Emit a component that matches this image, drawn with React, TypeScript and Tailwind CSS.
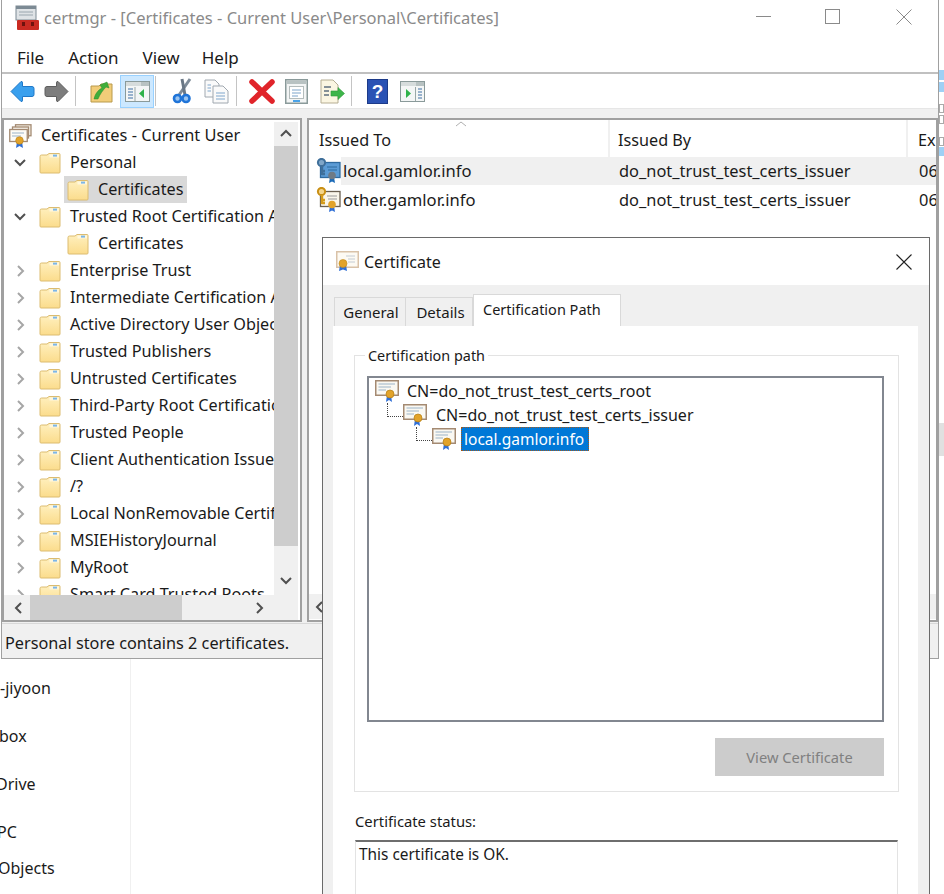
import React from "react";

const Folder = ({ className = "" }: { className?: string }) => (
  <svg width="22" height="22" viewBox="0 0 22 22" className={`shrink-0 ${className}`}>
    <defs>
      <linearGradient id="fg" x1="0" y1="0" x2="0" y2="1">
        <stop offset="0" stopColor="#fff0bf" />
        <stop offset="1" stopColor="#fbdc8c" />
      </linearGradient>
    </defs>
    <path d="M1 4.5 Q1 3 2.5 3 H8 L10 1.5 H20 Q21 1.5 21 2.5 V20 Q21 21 20 21 H2 Q1 21 1 20 Z" fill="url(#fg)" stroke="#dcbc70" strokeWidth="1" />
    <path d="M10.5 2.5 H20 V5.5 H10.5 Z" fill="#fff7dc" />
    <rect x="14" y="2.6" width="4" height="2" fill="#7cb6e8" />
  </svg>
);

const Cert = ({ className = "" }: { className?: string }) => (
  <svg width="24" height="24" viewBox="0 0 24 24" className={`shrink-0 ${className}`}>
    <rect x="0.75" y="1.75" width="22.5" height="14.5" fill="#faf8f2" stroke="#a48a72" strokeWidth="1.5" />
    <path d="M3.5 5 H20 M3.5 8 H16 M3.5 11 H11" stroke="#9cb4c8" strokeWidth="1.2" />
    <path d="M12 16 L11 23 L14 21 L17 23 L16 16 Z" fill="#2f6fd6" />
    <circle cx="15" cy="15" r="4" fill="#e2a32a" stroke="#b57e15" strokeWidth="0.7" />
  </svg>
);

const RootCert = () => (
  <svg width="23" height="24" viewBox="0 0 23 24" className="shrink-0">
    <rect x="6.5" y="0.75" width="15.5" height="11" fill="#f5f0e6" stroke="#a48a72" strokeWidth="1.3" />
    <rect x="3.5" y="3" width="16" height="11" fill="#f8f4ec" stroke="#a48a72" strokeWidth="1.3" />
    <rect x="0.75" y="5.5" width="17.5" height="12" fill="#fdfbf6" stroke="#a48a72" strokeWidth="1.3" />
    <path d="M3 9 H15 M3 12 H12" stroke="#9cb4c8" strokeWidth="1.1" />
    <path d="M8 18 L7 24 L10.5 22 L14 24 L13 18 Z" fill="#2f6fd6" />
    <circle cx="10.5" cy="16.5" r="3.8" fill="#e2a32a" stroke="#b57e15" strokeWidth="0.6" />
  </svg>
);

const DialogCert = () => (
  <svg width="23" height="21" viewBox="0 0 23 21" className="shrink-0">
    <rect x="0.75" y="0.75" width="21.5" height="15.5" fill="#fdfaf3" stroke="#d9c2a8" strokeWidth="1.5" />
    <path d="M10 5 H19 M12 8 H19 M12 11 H19" stroke="#c4ccd4" strokeWidth="1" />
    <path d="M4 14 L3 20 L7 18.5 L11 20 L10 14 Z" fill="#2f6fd6" />
    <circle cx="7" cy="12.5" r="4" fill="#e2a32a" stroke="#c08a1c" strokeWidth="0.6" />
  </svg>
);

const KeyCert = ({ blue = false }: { blue?: boolean }) => (
  <svg width="25" height="26" viewBox="0 0 25 26" className="shrink-0">
    <rect x="4.5" y="4.5" width="19.5" height="15" fill={blue ? "#5b9bd5" : "#faf6ea"} stroke={blue ? "#2f6a9f" : "#6b6050"} strokeWidth="1.3" />
    <path d="M11 9 H21 M12 12 H21" stroke={blue ? "#2f6a9f" : "#9a9a9a"} strokeWidth="1" />
    <circle cx="5.5" cy="4.5" r="3.6" fill={blue ? "#7fa6c8" : "#f4d58a"} stroke={blue ? "#3f6f9a" : "#c98f14"} strokeWidth="2" />
    <path d="M6 8 V17 M6 13 H9 M6 16 H9" stroke={blue ? "#3f6f9a" : "#d59c1a"} strokeWidth="2.4" />
    <path d="M14 19 L13 25 L16 23.5 L19 25 L18 19 Z" fill={blue ? "#1c6bb8" : "#2f6fd6"} />
    <circle cx="16" cy="17.5" r="3.8" fill={blue ? "#6f7a85" : "#e2a32a"} />
  </svg>
);

const Chevron = ({ dir, dark = false }: { dir: "down" | "right" | "left" | "up"; dark?: boolean }) => {
  const d = { down: "M1 3 L6 8 L11 3", right: "M4 1 L9 6 L4 11", left: "M8 1 L3 6 L8 11", up: "M1 8 L6 3 L11 8" }[dir];
  return (
    <svg width="12" height="12" viewBox="0 0 12 12" className="shrink-0">
      <path d={d} fill="none" stroke={dark ? "#505050" : "#a6a6a6"} strokeWidth="2" />
    </svg>
  );
};

const Sep = ({ className = "" }: { className?: string }) => <div className={`w-px h-[30px] bg-[#c4c4c4] shrink-0 ${className}`} />;

const TB = ({ children, active = false, className = "" }: { children: React.ReactNode; active?: boolean; className?: string }) => (
  <div className={`w-[34px] h-[33px] shrink-0 flex items-center justify-center border ${active ? "bg-[#cce8ff] border-[#99d1ff]" : "border-transparent"} ${className}`}>
    {children}
  </div>
);

const WinIcon = ({ side }: { side: "left" | "right" }) => (
  <svg width="25" height="21" viewBox="0 0 25 21">
    <rect x="0.5" y="0.5" width="24" height="20" fill="#f4f6f6" stroke="#8a9a9a" />
    <rect x="1" y="1" width="23" height="4" fill="#b8c2c2" />
    <rect x="1" y="1" width="15" height="4" fill="#d6dcdc" />
    {side === "left" ? (
      <>
        <path d="M3 8 H8 M3 11 H8 M3 14 H8 M3 17 H8" stroke="#7a9cc0" strokeWidth="1.4" />
        <path d="M10 6 V20" stroke="#9aa8a8" />
        <path d="M19 8 V17 L14 12.5 Z" fill="#2fb24a" />
      </>
    ) : (
      <>
        <path d="M18 8 H22 M18 11 H22 M18 14 H22 M18 17 H22" stroke="#7a9cc0" strokeWidth="1.4" />
        <path d="M15.5 6 V20" stroke="#9aa8a8" />
        <path d="M6 8 V17 L11 12.5 Z" fill="#2fb24a" />
      </>
    )}
  </svg>
);

const Toolbar = () => (
  <div className="flex items-center h-[34px] pl-[3px] bg-white">
    <TB>
      <svg width="25" height="23" viewBox="0 0 25 23">
        <path d="M1 11.5 L11 1.5 Q12.5 1 12.5 3 V6.5 H22 Q24 6.5 24 8.5 V14.5 Q24 16.5 22 16.5 H12.5 V20 Q12.5 22 11 21.5 Z" fill="#3aa0ee" stroke="#1f78c8" />
      </svg>
    </TB>
    <TB>
      <svg width="25" height="23" viewBox="0 0 25 23">
        <path d="M24 11.5 L14 1.5 Q12.5 1 12.5 3 V6.5 H3 Q1 6.5 1 8.5 V14.5 Q1 16.5 3 16.5 H12.5 V20 Q12.5 22 14 21.5 Z" fill="#7d7d7d" stroke="#5e5e5e" />
      </svg>
    </TB>
    <Sep className="ml-[2px]" />
    <TB className="ml-[8px]">
      <svg width="23" height="23" viewBox="0 0 23 23">
        <path d="M1 6 H9 L11 4 H22 V22 H1 Z" fill="#f2cd79" stroke="#b99a4d" />
        <path d="M4 19 C5 14 8 10 12 8 L10 5 L17 2 L19 8 L16 7 C13 10 10 14 8 19 Z" fill="#3fae3a" stroke="#2a8a2a" strokeWidth="0.5" />
      </svg>
    </TB>
    <TB active className="ml-[2px]"><WinIcon side="left" /></TB>
    <Sep className="ml-[1px]" />
    <TB className="ml-[9px]">
      <svg width="20" height="26" viewBox="0 0 20 26">
        <path d="M18 1 L7 17" stroke="#7f8c99" strokeWidth="3" />
        <path d="M10 1 L13 17" stroke="#6a7785" strokeWidth="3" />
        <circle cx="5.5" cy="20.5" r="3.5" fill="#9ac4f0" stroke="#1f74d8" strokeWidth="2.6" />
        <circle cx="14" cy="20.5" r="3.5" fill="#9ac4f0" stroke="#1f74d8" strokeWidth="2.6" />
      </svg>
    </TB>
    <TB>
      <svg width="25" height="25" viewBox="0 0 25 25">
        <path d="M1 1 H11 L15 5 V18 H1 Z" fill="#fafafa" stroke="#a0a8b0" />
        <path d="M9 7 H19 L24 12 V24 H9 Z" fill="#fafafa" stroke="#a0a8b0" />
        <path d="M3.5 6 H7 M3.5 9 H7 M3.5 12 H7 M12 14 H21 M12 17 H21 M12 20 H21" stroke="#7fa6cc" strokeWidth="1.2" />
      </svg>
    </TB>
    <Sep className="ml-[3px]" />
    <TB className="ml-[8px]">
      <svg width="26" height="25" viewBox="0 0 26 25">
        <path d="M3 3 L23 22 M23 3 L3 22" stroke="#e0242a" strokeWidth="5.5" strokeLinecap="round" />
      </svg>
    </TB>
    <TB>
      <svg width="23" height="25" viewBox="0 0 23 25">
        <rect x="0.75" y="0.75" width="21.5" height="23.5" fill="#f3f5f5" stroke="#8a9a9a" strokeWidth="1.5" />
        <rect x="1.5" y="1.5" width="20" height="3.5" fill="#b8c2c2" />
        <rect x="4.5" y="7.5" width="14" height="12" fill="#fff" stroke="#b4bcbc" />
        <path d="M7 11 H16 M7 14 H16 M7 17 H13" stroke="#7fa6cc" strokeWidth="1.2" />
        <rect x="8" y="21" width="7" height="2" fill="#4aa3e8" />
      </svg>
    </TB>
    <TB className="ml-[2px]">
      <svg width="25" height="25" viewBox="0 0 25 25">
        <path d="M1 1 H13 L18 6 V24 H1 Z" fill="#fbf6e2" stroke="#b5ad92" />
        <path d="M4 8 H11 M4 12 H9 M4 16 H9" stroke="#5f6f7f" strokeWidth="1.3" />
        <path d="M24.5 14.5 L18 8.5 V12 H11 V17 H18 V20.5 Z" fill="#3eb54a" stroke="#2f9a3a" strokeWidth="0.6" />
      </svg>
    </TB>
    <Sep className="ml-[2px]" />
    <TB className="ml-[8px]">
      <svg width="21" height="25" viewBox="0 0 21 25">
        <rect x="0.5" y="0.5" width="20" height="24" fill="#2a52b4" stroke="#1c3a88" />
        <text x="10.5" y="19" textAnchor="middle" fontSize="19" fontWeight="700" fontFamily="Liberation Sans, sans-serif" fill="#fff">?</text>
      </svg>
    </TB>
    <TB className="ml-[1px]"><WinIcon side="right" /></TB>
  </div>
);

type Node = { label: string; level: 0 | 1 | 2; chevron?: "down" | "right"; selected?: boolean };
const rows: Node[] = [
  { label: "Personal", level: 1, chevron: "down" },
  { label: "Certificates", level: 2, selected: true },
  { label: "Trusted Root Certification Authorities", level: 1, chevron: "down" },
  { label: "Certificates", level: 2 },
  { label: "Enterprise Trust", level: 1, chevron: "right" },
  { label: "Intermediate Certification Authorities", level: 1, chevron: "right" },
  { label: "Active Directory User Object", level: 1, chevron: "right" },
  { label: "Trusted Publishers", level: 1, chevron: "right" },
  { label: "Untrusted Certificates", level: 1, chevron: "right" },
  { label: "Third-Party Root Certification Authorities", level: 1, chevron: "right" },
  { label: "Trusted People", level: 1, chevron: "right" },
  { label: "Client Authentication Issuers", level: 1, chevron: "right" },
  { label: "/?", level: 1, chevron: "right" },
  { label: "Local NonRemovable Certificates", level: 1, chevron: "right" },
  { label: "MSIEHistoryJournal", level: 1, chevron: "right" },
  { label: "MyRoot", level: 1, chevron: "right" },
  { label: "Smart Card Trusted Roots", level: 1, chevron: "right" },
];

const TreeRow = ({ n }: { n: Node }) => (
  <div className="h-[27px] flex items-center whitespace-nowrap">
    {n.level === 1 ? (
      <div className="flex items-center pl-[10px] gap-[13px]">
        <Chevron dir={n.chevron!} dark={n.chevron === "down"} />
        <Folder />
        <span className="ml-[-4px] mt-[-2px]">{n.label}</span>
      </div>
    ) : (
      <div className={`ml-[60px] h-[27px] flex items-center pl-[3px] pr-[4px] ${n.selected ? "bg-[#d9d9d9]" : ""}`}>
        <Folder />
        <span className="ml-[9px] mt-[-2px]">{n.label}</span>
      </div>
    )}
  </div>
);

const ListRow = ({ blue, name, selected, className = "" }: { blue?: boolean; name: string; selected?: boolean; className?: string }) => (
  <div className={`h-[28px] flex items-center whitespace-nowrap pl-[7px] ${className}`}>
    <KeyCert blue={blue} />
    <div className={`flex-1 h-full flex items-center ${selected ? "bg-[#f0f0f0]" : ""}`}>
      <span className="ml-[2px] w-[276px] shrink-0 text-[16.6px]">{name}</span>
      <span className="w-[300px] shrink-0">do_not_trust_test_certs_issuer</span>
      <span>06</span>
    </div>
  </div>
);

const App = () => (
  <div className="relative w-[944px] h-[894px] overflow-hidden bg-white text-[#1a1a1a] text-[16.4px] leading-[20px] font-['Noto_Sans','Open_Sans',sans-serif]">
    {/* desktop behind */}
    <div className="absolute left-0 top-[658px] w-[131px] h-[236px] border-r border-[#f0f0f0] overflow-hidden whitespace-nowrap text-[16px]">
      <div className="flex flex-col pt-[20px]">
        <div className="h-[48px]">-jiyoon</div>
        <div className="h-[48px] ml-[-1px]">box</div>
        <div className="h-[48px] ml-[-4px]">Drive</div>
        <div className="h-[36px] ml-[-3px]">PC</div>
        <div className="ml-[-2px]">Objects</div>
      </div>
    </div>
    <div className="absolute right-0 top-[70px] w-[5px] flex flex-col">
      <div className="h-[10px] bg-[#9fd0f5]" />
      <div className="h-[2px]" />
      <div className="h-[10px] bg-[#9fd0f5]" />
      <div className="h-[12px]" />
      <div className="h-[9px] border border-[#aaa]" />
      <div className="h-[2px]" />
      <div className="h-[9px] border border-[#aaa]" />
      <div className="h-[13px]" />
      <div className="h-[9px] border border-[#aaa]" />
      <div className="h-[1px]" />
      <div className="h-[9px] bg-[#9fd0f5]" />
      <div className="h-[267px]" />
      <div className="h-[33px] bg-[#e0e0e0]" />
    </div>

    {/* certmgr window */}
    <div className="absolute left-px top-0 w-[938px] h-[659px] flex flex-col bg-white border-x border-b border-[#a0a0a0]">
      <div className="h-[40px] flex items-center pl-[13px] shrink-0">
        <svg width="24" height="26" viewBox="0 0 24 26" className="shrink-0 mt-[-4px]">
          <rect x="1" y="1" width="20" height="14" fill="#dfe3e6" stroke="#7c8a94" />
          <rect x="1" y="1" width="20" height="3" fill="#7c8a94" />
          <path d="M4 7 H18 M4 10 H18" stroke="#9aa6ae" />
          <rect x="2" y="15" width="22" height="10" rx="1" fill="#c92a22" />
          <rect x="7" y="17" width="3" height="4" fill="#6e120e" />
          <rect x="16" y="17" width="3" height="4" fill="#6e120e" />
        </svg>
        <span className="ml-[5px] mt-[-4px] text-[16.5px] text-[#8a8a8a] whitespace-nowrap">certmgr - [Certificates - Current User\Personal\Certificates]</span>
        <div className="ml-auto flex items-center mr-[26px] mt-[-7px]">
          <div className="w-[15px] h-px bg-[#8a8a8a] mr-[54px]" />
          <div className="w-[15px] h-[15px] border border-[#8a8a8a] mr-[56px]" />
          <svg width="16" height="16" viewBox="0 0 16 16"><path d="M0.5 0.5 L15.5 15.5 M15.5 0.5 L0.5 15.5" stroke="#8a8a8a" strokeWidth="1" /></svg>
        </div>
      </div>
      <div className="h-[34px] flex items-center pl-[15px] pt-[3px] border-b-2 border-[#c0c0c0] shrink-0 text-[17px]">
        <span>File</span><span className="ml-[24px]">Action</span><span className="ml-[24px]">View</span><span className="ml-[22px]">Help</span>
      </div>
      <Toolbar />
      <div className="flex-1 min-h-0 bg-[#f0f0f0] border-t border-[#e6e6e6] pt-[9px] flex gap-[5px]">
        <div className="w-[300px] h-[504px] border-2 border-[#a0a0a0] border-b-2 bg-white flex flex-col shrink-0 text-[16.2px]">
          <div className="flex h-[475px] pt-[2px]">
            <div className="w-[270px] overflow-hidden">
              <div className="h-[27px] flex items-center pl-[5px] whitespace-nowrap">
                <RootCert />
                <span className="ml-[9px] mt-[-2px] text-[16.4px]">Certificates - Current User</span>
              </div>
              {rows.map((n, i) => <TreeRow key={i} n={n} />)}
            </div>
            <div className="w-[24px] bg-[#f0f0f0] flex flex-col items-center shrink-0">
              <div className="h-[24px] flex items-center justify-center"><Chevron dir="up" dark /></div>
              <div className="w-full h-[400px] bg-[#cdcdcd]" />
              <div className="flex-1 flex items-end justify-center pb-[8px]"><Chevron dir="down" dark /></div>
            </div>
          </div>
          <div className="h-[25px] w-[294px] bg-[#f0f0f0] flex items-center">
            <div className="w-[26px] pl-[4px] flex justify-center"><Chevron dir="left" dark /></div>
            <div className="w-[152px] h-full bg-[#cdcdcd]" />
            <div className="ml-auto w-[26px] mr-[26px] flex justify-center"><Chevron dir="right" dark /></div>
          </div>
        </div>
        <div className="flex-1 h-[504px] border-2 border-[#a0a0a0] bg-white flex flex-col min-w-0">
          <div className="h-[37px] flex items-end whitespace-nowrap relative overflow-hidden shrink-0 text-[16.2px]">
            <div className="w-[301px] pl-[10px] pb-[7px] h-full flex items-end border-r-2 border-[#f0f0f0]">Issued To</div>
            <div className="w-[298px] pl-[8px] pb-[7px] h-full flex items-end border-r-2 border-[#f0f0f0]">Issued By</div>
            <div className="pl-[10px] pb-[7px]">Ex</div>
            <svg width="12" height="6" viewBox="0 0 12 6" className="absolute left-[146px] top-[1px]"><path d="M1 5 L6 1 L11 5" fill="none" stroke="#b0b0b0" /></svg>
          </div>
          <div className="flex-1 overflow-hidden">
            <ListRow blue name="local.gamlor.info" selected />
            <ListRow name="other.gamlor.info" className="mt-px" />
          </div>
          <div className="h-[25px] bg-[#f0f0f0] flex items-center pl-[5px] mb-px shrink-0"><Chevron dir="left" dark /></div>
        </div>
      </div>
      <div className="h-[35px] bg-[#f0f0f0] border-t border-[#d8d8d8] flex items-center pl-[3px] pt-[4px] whitespace-nowrap shrink-0 text-[16.25px]">
        Personal store contains 2 certificates.
      </div>
    </div>

    {/* Certificate dialog */}
    <div className="absolute left-[322px] top-[237px] w-[608px] h-[670px] bg-[#f0f0f0] border border-[#6a6a6a] flex flex-col text-[16px]">
      <div className="h-[47px] bg-white flex items-center pl-[13px] shrink-0">
        <DialogCert />
        <span className="ml-[5px]">Certificate</span>
        <svg width="16" height="16" viewBox="0 0 16 16" className="ml-auto mr-[17px]"><path d="M0.5 0.5 L15.5 15.5 M15.5 0.5 L0.5 15.5" stroke="#222" strokeWidth="1.1" /></svg>
      </div>
      <div className="flex items-end h-[41px] pl-[11px] shrink-0 text-[15px]">
        <div className="w-[72px] h-[29px] pl-[2px] border border-[#d9d9d9] border-b-0 flex items-center justify-center">General</div>
        <div className="w-[67px] h-[29px] pl-[3px] border-r border-t border-[#d9d9d9] flex items-center justify-center">Details</div>
        <div className="w-[148px] h-[32px] bg-white border border-[#d9d9d9] border-b-0 flex items-center pl-[9px] pb-[3px] text-[14.5px] whitespace-nowrap">Certification Path</div>
      </div>
      <div className="flex-1 ml-[10px] mr-[11px] bg-white pt-[29px] px-[21px] flex flex-col">
        <div className="relative h-[437px] w-[545px] border border-[#e3e3e3] shrink-0 px-[12px] pt-[20px] flex flex-col">
          <div className="absolute left-[10px] top-[-10px] bg-white px-[3px] text-[14.4px]">Certification path</div>
          <div className="h-[346px] w-[517px] border-2 border-[#828790] border-b-2 bg-white pl-[6px] pt-px whitespace-nowrap shrink-0">
            <div className="h-[24px] flex items-center">
              <Cert />
              <span className="ml-[8px]">CN=do_not_trust_test_certs_root</span>
            </div>
            <div className="h-[24px] flex items-center ml-[12px]">
              <div className="w-[16px] h-[14px] mt-[-10px] border-l border-b border-dotted border-[#444] shrink-0" />
              <Cert />
              <span className="ml-[9px]">CN=do_not_trust_test_certs_issuer</span>
            </div>
            <div className="h-[24px] flex items-center ml-[41px]">
              <div className="w-[16px] h-[14px] mt-[-10px] border-l border-b border-dotted border-[#444] shrink-0" />
              <Cert />
              <span className="ml-[5px] h-[24px] w-[128px] flex items-center pl-[3px] bg-[#0078d7] text-white text-[15.5px] outline-1 outline-dotted outline-[#a05a20] -outline-offset-1">local.gamlor.info</span>
            </div>
          </div>
          <div className="w-[169px] h-[38px] ml-auto mr-[2px] mt-[16px] bg-[#cccccc] text-[#808080] text-[14.7px] flex items-center justify-center">View Certificate</div>
        </div>
        <div className="mt-[19px] ml-px whitespace-nowrap text-[14.8px]">Certificate status:</div>
        <div className="mt-[9px] ml-px w-[543px] h-[100px] border-t-2 border-x border-t-[#6e6e6e] border-x-[#e3e3e3] pl-[3px] pt-[3px] text-[15.4px]">This certificate is OK.</div>
      </div>
    </div>
  </div>
);

export default App;
